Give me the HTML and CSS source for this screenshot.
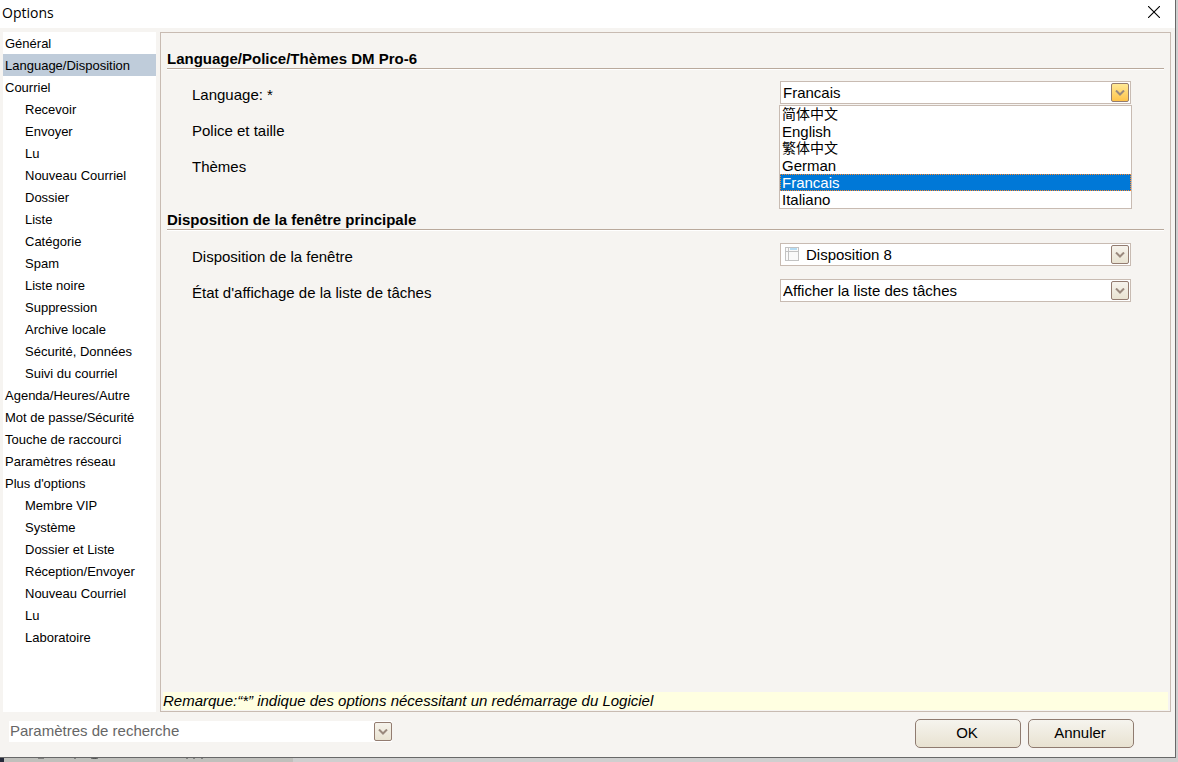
FILE: index.html
```html
<!DOCTYPE html>
<html lang="fr">
<head>
<meta charset="utf-8">
<title>Options</title>
<link rel="stylesheet" href="styles.css">
</head>
<body>
<svg class="defs" aria-hidden="true">
  <symbol id="chevron" viewBox="0 0 10 6"><path d="M1 .5l4 4 4-4" fill="none" stroke="currentColor" stroke-width="2"/></symbol>
</svg>
<div class="window">
  <header class="titlebar">
    <h1 class="title">Options</h1>
    <button class="close" type="button" aria-label="Fermer">
      <svg width="12" height="12" viewBox="0 0 12 12"><path d="M0 0L12 12M12 0L0 12" stroke="#000" stroke-width="1.1"/></svg>
    </button>
  </header>
  <div class="content">
    <nav class="sidebar">
      <a class="item" href="#">Général</a>
      <a class="item current" href="#">Language/Disposition</a>
      <a class="item" href="#">Courriel</a>
      <a class="item child" href="#">Recevoir</a>
      <a class="item child" href="#">Envoyer</a>
      <a class="item child" href="#">Lu</a>
      <a class="item child" href="#">Nouveau Courriel</a>
      <a class="item child" href="#">Dossier</a>
      <a class="item child" href="#">Liste</a>
      <a class="item child" href="#">Catégorie</a>
      <a class="item child" href="#">Spam</a>
      <a class="item child" href="#">Liste noire</a>
      <a class="item child" href="#">Suppression</a>
      <a class="item child" href="#">Archive locale</a>
      <a class="item child" href="#">Sécurité, Données</a>
      <a class="item child" href="#">Suivi du courriel</a>
      <a class="item" href="#">Agenda/Heures/Autre</a>
      <a class="item" href="#">Mot de passe/Sécurité</a>
      <a class="item" href="#">Touche de raccourci</a>
      <a class="item" href="#">Paramètres réseau</a>
      <a class="item" href="#">Plus d'options</a>
      <a class="item child" href="#">Membre VIP</a>
      <a class="item child" href="#">Système</a>
      <a class="item child" href="#">Dossier et Liste</a>
      <a class="item child" href="#">Réception/Envoyer</a>
      <a class="item child" href="#">Nouveau Courriel</a>
      <a class="item child" href="#">Lu</a>
      <a class="item child" href="#">Laboratoire</a>
    </nav>
    <main class="panel">
      <section class="group">
        <h2 class="heading">Language/Police/Thèmes DM Pro-6</h2>
        <div class="rows">
          <div class="row">
            <label class="label" for="language">Language: *</label>
            <div class="combo open">
              <select class="select" id="language"><option>Francais</option></select>
              <span class="arrow"><svg width="10" height="6"><use href="#chevron"/></svg></span>
              <ul class="list" role="listbox" aria-label="Language">
                <li class="option chinese" role="option">简体中文</li>
                <li class="option" role="option">English</li>
                <li class="option chinese" role="option">繁体中文</li>
                <li class="option" role="option">German</li>
                <li class="option selected" role="option" aria-selected="true">Francais</li>
                <li class="option" role="option">Italiano</li>
              </ul>
            </div>
          </div>
          <div class="row"><span class="label">Police et taille</span></div>
          <div class="row"><span class="label">Thèmes</span></div>
        </div>
      </section>
      <section class="group">
        <h2 class="heading">Disposition de la fenêtre principale</h2>
        <div class="rows">
          <div class="row">
            <label class="label" for="layout">Disposition de la fenêtre</label>
            <div class="combo">
              <svg class="layout-icon" width="14" height="14" viewBox="0 0 14 14">
                <rect x=".5" y=".5" width="13" height="13" fill="#fafafa" stroke="#c3c3c3"/>
                <path d="M5 2h7" stroke="#b5dcf3" stroke-width="2"/>
                <path d="M1 4.500h12M3.500 1v12" stroke="#c3c3c3"/>
              </svg>
              <select class="select with-icon" id="layout"><option>Disposition 8</option></select>
              <span class="arrow"><svg width="10" height="6"><use href="#chevron"/></svg></span>
            </div>
          </div>
          <div class="row">
            <label class="label" for="tasks">État d'affichage de la liste de tâches</label>
            <div class="combo">
              <select class="select" id="tasks"><option>Afficher la liste des tâches</option></select>
              <span class="arrow"><svg width="10" height="6"><use href="#chevron"/></svg></span>
            </div>
          </div>
        </div>
      </section>
      <p class="note">Remarque:“*” indique des options nécessitant un redémarrage du Logiciel</p>
    </main>
  </div>
  <footer class="footer">
    <div class="search">
      <input class="search-input" type="text" placeholder="Paramètres de recherche" aria-label="Paramètres de recherche">
      <button class="search-arrow" type="button" aria-label="Afficher la liste"><svg width="10" height="6"><use href="#chevron"/></svg></button>
    </div>
    <div class="actions">
      <button class="button" type="button">OK</button>
      <button class="button" type="button">Annuler</button>
    </div>
  </footer>
</div>
<div class="behind">
  <svg width="293" height="4" viewBox="0 0 293 4" aria-hidden="true">
    <rect width="293" height="4" fill="#c0c0bc"/>
    <rect width="4" height="4" fill="#252a3a"/>
    <path d="M38 0h6M75 0v1M91 0q4 1 7 0M187 0v1M194 0v1M202 0v1" stroke="#444" stroke-width="1" fill="none"/>
  </svg>
</div>
</body>
</html>
```
FILE: styles.css
```css
* {
  box-sizing: border-box;
}

body {
  margin: 0;
  min-height: 100vh;
  display: flex;
  flex-direction: column;
  padding-right: 2px;
  background: #cfcfcf;
  color: #000;
  font: 15px/18px "Liberation Sans", "Noto Sans CJK SC", sans-serif;
}

button,
input,
select {
  font: inherit;
  color: inherit;
}

.defs {
  display: none;
}

.window {
  flex: 1;
  display: flex;
  flex-direction: column;
  background: #f6f4f1;
  border-right: 1px solid #686868;
  border-bottom: 1px solid #686868;
}

.titlebar {
  display: flex;
  justify-content: space-between;
  align-items: center;
  height: 28px;
  padding: 0 15px 4px 2px;
  background: #fff;
}

.title {
  margin: 0;
  padding-top: 2px;
  font: 14px/20px "Open Sans", sans-serif;
}

.close {
  display: flex;
  padding: 0;
  border: 0;
  background: none;
}

.content {
  flex: 1;
  display: flex;
  gap: 4px;
  padding: 4px 4px 0 3px;
}

.sidebar {
  width: 153px;
  background: #fff;
  font-size: 13px;
  line-height: 20px;
}

.item {
  display: block;
  padding: 2px 0 0 2px;
  color: #000;
  text-decoration: none;
  white-space: nowrap;
}

.child {
  padding-left: 22px;
}

.current {
  background: #bfccda;
}

.panel {
  flex: 1;
  display: flex;
  flex-direction: column;
  border: 1px solid #c8bbb2;
}

.group {
  padding: 17px 6px 18px;
}

.heading {
  margin: 0;
  border-bottom: 1px solid #b9a99c;
  box-shadow: 0 1px #fff;
  font-size: 15px;
  line-height: 18px;
}

.rows {
  display: flex;
  flex-direction: column;
  gap: 13px;
  padding: 12px 33px 0 25px;
}

.group + .group .rows {
  padding-top: 13px;
}

.row {
  display: grid;
  grid-template-columns: 588fr 351fr;
  min-height: 23px;
}

.label {
  padding-top: 5px;
}

.combo {
  position: relative;
  display: flex;
}

.select {
  flex: 1;
  height: 23px;
  padding: 0 24px 0 2px;
  border: 1px solid #c8bbb2;
  border-radius: 0;
  background: #fff;
  appearance: none;
}

.with-icon {
  padding-left: 25px;
}

.layout-icon {
  position: absolute;
  left: 5px;
  top: 4px;
}

.arrow,
.search-arrow {
  display: flex;
  align-items: center;
  justify-content: center;
  width: 18px;
  height: 19px;
  padding: 0;
  border: 1px solid #937c70;
  border-radius: 2px;
  background: linear-gradient(#f6f3ec, #e9e3d2);
  color: #9a897d;
}

.arrow {
  position: absolute;
  top: 2px;
  right: 2px;
  pointer-events: none;
}

.open .arrow {
  background: linear-gradient(#ffe996, #ffc34a);
}

.list {
  position: absolute;
  top: 24px;
  left: -1px;
  right: -1px;
  z-index: 1;
  margin: 0;
  padding: 0;
  border: 1px solid #c8bbb2;
  background: #fff;
  list-style: none;
}

.option {
  height: 17px;
  padding-left: 2px;
  line-height: 17px;
}

.chinese {
  font-size: 14px;
}

.selected {
  background: #0078d7;
  color: #fff;
  outline: 1px dotted #ff8728;
  outline-offset: -1px;
}

.note {
  margin: auto 2px 1px;
  background: #ffffe1;
  font-style: italic;
}

.footer {
  display: flex;
  justify-content: space-between;
  align-items: flex-start;
  padding: 7px 41px 9px 9px;
}

.search {
  display: flex;
  align-items: center;
  width: 383px;
  height: 21px;
  margin-top: 2px;
  background: #fff;
}

.search-input {
  flex: 1;
  min-width: 0;
  padding: 0 1px 2px;
  border: 0;
  background: none;
}

.search-input::placeholder {
  color: #666;
  opacity: 1;
}

.actions {
  display: flex;
  gap: 7px;
}

.button {
  width: 106px;
  height: 29px;
  padding: 0 2px 2px 0;
  border: 1px solid #8f7b70;
  border-radius: 5px;
  background: linear-gradient(#f6f4ee, #e8e2d1);
}

.behind {
  display: flex;
  height: 4px;
}
```
